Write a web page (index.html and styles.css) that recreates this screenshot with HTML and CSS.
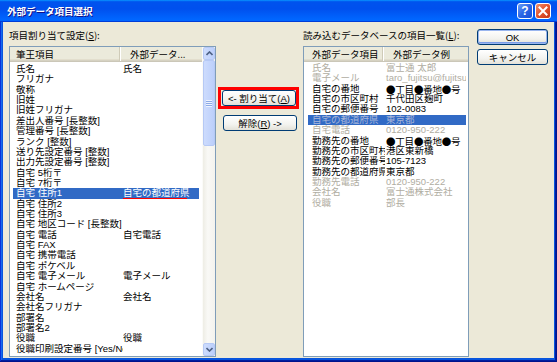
FILE: index.html
```html
<!DOCTYPE html>
<html lang="ja">

<head>
  <meta charset="UTF-8">
  <title>外部データ項目選択</title>
  <link rel="stylesheet" href="styles.css">
</head>

<body>
  <div class="window">
    <div class="titlebar">
      <span class="title">外部データ項目選択</span>
      <div class="title-btns">
        <span class="tb help">?</span>
        <span class="tb close">
          <svg width="10" height="10" viewBox="0 0 10 10"><path d="M1.5 1.5 L8.5 8.5 M8.5 1.5 L1.5 8.5" stroke="#fff" stroke-width="2" stroke-linecap="square" /></svg>
        </span>
      </div>
    </div>

    <div class="body">
      <!-- 左：項目割り当て設定 -->
      <div class="col-left">
        <div class="label">項目割り当て設定(<u>S</u>):</div>
        <div class="list list-left">
          <div class="list-main">
            <div class="head"><span class="h1">筆王項目</span><span class="h2">外部データ...</span></div>
            <div class="rows">
              <div class="row"><span class="c1">氏名</span><span class="c2">氏名</span></div>
              <div class="row"><span class="c1">フリガナ</span><span class="c2"></span></div>
              <div class="row"><span class="c1">敬称</span><span class="c2"></span></div>
              <div class="row"><span class="c1">旧姓</span><span class="c2"></span></div>
              <div class="row"><span class="c1">旧姓フリガナ</span><span class="c2"></span></div>
              <div class="row"><span class="c1">差出人番号 [長整数]</span><span class="c2"></span></div>
              <div class="row"><span class="c1">管理番号 [長整数]</span><span class="c2"></span></div>
              <div class="row"><span class="c1">ランク [整数]</span><span class="c2"></span></div>
              <div class="row"><span class="c1">送り先設定番号 [整数]</span><span class="c2"></span></div>
              <div class="row"><span class="c1">出力先設定番号 [整数]</span><span class="c2"></span></div>
              <div class="row"><span class="c1">自宅 5桁〒</span><span class="c2"></span></div>
              <div class="row"><span class="c1">自宅 7桁〒</span><span class="c2"></span></div>
              <div class="row selected"><span class="c1">自宅 住所1</span><span class="c2"><span class="mark-line">自宅の都道府県</span></span></div>
              <div class="row"><span class="c1">自宅 住所2</span><span class="c2"></span></div>
              <div class="row"><span class="c1">自宅 住所3</span><span class="c2"></span></div>
              <div class="row"><span class="c1">自宅 地区コード [長整数]</span><span class="c2"></span></div>
              <div class="row"><span class="c1">自宅 電話</span><span class="c2">自宅電話</span></div>
              <div class="row"><span class="c1">自宅 FAX</span><span class="c2"></span></div>
              <div class="row"><span class="c1">自宅 携帯電話</span><span class="c2"></span></div>
              <div class="row"><span class="c1">自宅 ポケベル</span><span class="c2"></span></div>
              <div class="row"><span class="c1">自宅 電子メール</span><span class="c2">電子メール</span></div>
              <div class="row"><span class="c1">自宅 ホームページ</span><span class="c2"></span></div>
              <div class="row"><span class="c1">会社名</span><span class="c2">会社名</span></div>
              <div class="row"><span class="c1">会社名フリガナ</span><span class="c2"></span></div>
              <div class="row"><span class="c1">部署名</span><span class="c2"></span></div>
              <div class="row"><span class="c1">部署名2</span><span class="c2"></span></div>
              <div class="row"><span class="c1">役職</span><span class="c2">役職</span></div>
              <div class="row"><span class="c1">役職印刷設定番号 [Yes/No]</span><span class="c2"></span></div>
            </div>
          </div>
          <div class="vscroll">
            <div class="sb-btn">
              <svg width="7" height="5" viewBox="0 0 7 5"><path d="M0.5 4 L3.5 1 L6.5 4" fill="none" stroke="#4d6185" stroke-width="1.6" /></svg>
            </div>
            <div class="sb-thumb"><span class="grip"></span></div>
            <div class="sb-track"></div>
            <div class="sb-btn">
              <svg width="7" height="5" viewBox="0 0 7 5"><path d="M0.5 1 L3.5 4 L6.5 1" fill="none" stroke="#4d6185" stroke-width="1.6" /></svg>
            </div>
          </div>
        </div>
      </div>

      <!-- 中：割り当て / 解除 -->
      <div class="col-mid">
        <div class="red-box"><button class="btn">&lt;- 割り当て(<u>A</u>)</button></div>
        <button class="btn btn-remove">解除(<u>R</u>) -&gt;</button>
      </div>

      <!-- 右：読み込むデータベースの項目一覧 -->
      <div class="col-right">
        <div class="label">読み込むデータベースの項目一覧(<u>L</u>):</div>
        <div class="list list-right">
          <div class="head"><span class="h1">外部データ項目</span><span class="h2">外部データ例</span></div>
          <div class="rows">
            <div class="row used"><span class="c1">氏名</span><span class="c2">富士通 太郎</span></div>
            <div class="row used"><span class="c1">電子メール</span><span class="c2">taro_fujitsu@fujitsu.com</span></div>
            <div class="row"><span class="c1">自宅の番地</span><span class="c2 jp">●丁目●番地●号</span></div>
            <div class="row"><span class="c1">自宅の市区町村</span><span class="c2">千代田区麹町</span></div>
            <div class="row"><span class="c1">自宅の郵便番号</span><span class="c2">102-0083</span></div>
            <div class="row used selected"><span class="c1">自宅の都道府県</span><span class="c2">東京都</span></div>
            <div class="row used"><span class="c1">自宅電話</span><span class="c2">0120-950-222</span></div>
            <div class="row"><span class="c1">勤務先の番地</span><span class="c2 jp">●丁目●番地●号</span></div>
            <div class="row"><span class="c1">勤務先の市区町村</span><span class="c2">港区東新橋</span></div>
            <div class="row"><span class="c1">勤務先の郵便番号</span><span class="c2">105-7123</span></div>
            <div class="row"><span class="c1">勤務先の都道府県</span><span class="c2">東京都</span></div>
            <div class="row used"><span class="c1">勤務先電話</span><span class="c2">0120-950-222</span></div>
            <div class="row used"><span class="c1">会社名</span><span class="c2">富士通株式会社</span></div>
            <div class="row used"><span class="c1">役職</span><span class="c2">部長</span></div>
          </div>
        </div>
      </div>

      <div class="col-actions">
        <button class="btn btn-default">OK</button>
        <button class="btn">キャンセル</button>
      </div>
    </div>
  </div>
</body>

</html>
```

FILE: styles.css
```css
* {
  box-sizing: border-box;
}

body {
  margin: 0;
  font-family: "Liberation Sans", "Noto Sans CJK JP", sans-serif;
  font-size: 9.5px;
  color: #000;
}

.window {
  width: 557px;
  height: 362px;
  padding: 0 3px 4px;
  background: #0855dd;
  box-shadow: inset -1px -1px #00138c, inset 1px 0 #0831d9, inset -2px -2px #001ea0, inset 2px 0 #166aee;
}

.titlebar {
  height: 22px;
  margin: 0 -3px;
  padding: 0 6px 0 7px;
  display: flex;
  align-items: center;
  justify-content: space-between;
  background: linear-gradient(180deg, #0997ff, #0053ee 8%, #0050ee 40%, #0066ff 88%, #0066ff 93%, #005bff 95%, #003dd7 96%, #003dd7);
}

.title {
  color: #fff;
  font-family: "Noto Sans CJK JP", sans-serif;
  font-weight: bold;
  font-size: 9.5px;
  text-shadow: 1px 1px #0f1089;
}

.title-btns {
  display: flex;
  gap: 2px;
}

.tb {
  width: 16px;
  height: 16px;
  border: 1px solid #fff;
  border-radius: 3px;
  display: flex;
  align-items: center;
  justify-content: center;
  color: #fff;
  font-weight: bold;
  font-size: 12px;
}

.help {
  background: linear-gradient(135deg, #6d9ff7, #2b66e6 50%, #1a4fd6);
}

.close {
  background: linear-gradient(135deg, #f08f6e, #e2542d 50%, #c3361a);
}

.body {
  height: 336px;
  display: flex;
  align-items: flex-start;
  padding: 7px 0 0 6px;
  background: #ece9d8;
}

.label {
  height: 12px;
  line-height: 12px;
  white-space: nowrap;
  font-family: "Noto Sans CJK JP", sans-serif;
}

.col-left {
  width: 207px;
}

.list {
  margin-top: 5px;
  height: 311px;
  border: 1px solid #7f9db9;
  background: #fff;
  overflow: hidden;
}

.list-left {
  display: flex;
}

.list-main {
  flex: 1;
  min-width: 0;
}

.head {
  height: 15px;
  display: flex;
  align-items: center;
  background: #ebeadb;
  border-bottom: 1px solid #cbc7b8;
  box-shadow: inset 0 -1px #d6d2c2, inset 0 -2px #e2decd;
  white-space: nowrap;
  font-family: "Noto Sans CJK JP", sans-serif;
}

.head span {
  height: 100%;
  line-height: 14px;
}

.h1 {
  border-right: 1px solid #cfcbb8;
}

.h2 {
  border-left: 1px solid #fff;
  flex: 1;
}

.rows {
  padding-top: 2px;
}

.row {
  display: flex;
  height: 10.37px;
  line-height: 10.37px;
  white-space: nowrap;
}

.c1,
.c2 {
  overflow: hidden;
}

.c2 {
  flex: 1;
}

.jp {
  font-family: "Noto Sans CJK JP", sans-serif;
  letter-spacing: -0.2px;
}

.selected {
  background: #316ac5;
  color: #fff;
}

/* 左リスト */
.list-left .h1 {
  width: 110px;
  padding-left: 6px;
}

.list-left .h2 {
  padding-left: 9px;
}

.list-left .row {
  margin-left: 3px;
  width: 186px;
}

.list-left .c1 {
  width: 110px;
  padding-left: 3px;
}

.mark-line {
  position: relative;
}

.mark-line::after {
  content: "";
  position: absolute;
  left: -1px;
  right: 3px;
  top: 11px;
  height: 3px;
  background: #f00;
}

.vscroll {
  width: 13px;
  display: flex;
  flex-direction: column;
  background: #f4f3ee;
  border-left: 1px solid #fbfbf8;
}

.sb-btn,
.sb-thumb {
  border: 1px solid #b6c9f5;
  border-radius: 2px;
  background: linear-gradient(90deg, #cddcfd, #bccffb);
}

.sb-btn {
  height: 13px;
  display: flex;
  align-items: center;
  justify-content: center;
}

.sb-thumb {
  height: 86px;
  display: flex;
  align-items: center;
  justify-content: center;
}

.grip {
  width: 6px;
  height: 7px;
  background: repeating-linear-gradient(180deg, #eef3fe 0 1px, #8caae6 1px 2px);
}

.sb-track {
  flex: 1;
  background: linear-gradient(90deg, #eeede5, #f9f9f6 40%, #f4f3ee);
}

/* 中央ボタン */
.col-mid {
  width: 81px;
  margin-left: 2px;
  margin-top: 58px;
}

.btn {
  display: block;
  height: 16px;
  padding: 0;
  border: 1px solid #003c74;
  border-radius: 3px;
  background: linear-gradient(180deg, #fff, #f3f3ef 60%, #e3e1d8);
  font-family: "Liberation Sans", "Noto Sans CJK JP", sans-serif;
  font-size: 9.5px;
  color: #000;
  line-height: 13px;
  white-space: nowrap;
}

.red-box {
  width: 81px;
  border: 3px solid #f00;
  padding-left: 1px;
}

.red-box .btn {
  width: 74px;
}

.btn-remove {
  width: 74px;
  margin: 6px 0 0 5px;
}

/* 右リスト */
.col-right {
  width: 166px;
  margin-left: 4px;
}

.list-right .h1 {
  width: 79px;
  padding-left: 8px;
}

.list-right .h2 {
  padding-left: 9px;
}

.list-right .rows {
  padding-top: 1px;
}

.list-right .row {
  margin-left: 4px;
  width: 158px;
}

.list-right .c1 {
  width: 77px;
  padding-left: 4px;
}

.list-right .c2 {
  padding-left: 1px;
}

.used {
  color: #b0ada2;
}

.used.selected {
  color: #a9b6d8;
}

.col-actions {
  width: 71px;
  margin-left: 8px;
}

.col-actions .btn {
  width: 71px;
  margin-bottom: 4px;
}

.btn-default {
  box-shadow: inset 0 0 0 1px #9ab6ef, inset 0 -1px 0 1px #7a9ce8;
}
```
